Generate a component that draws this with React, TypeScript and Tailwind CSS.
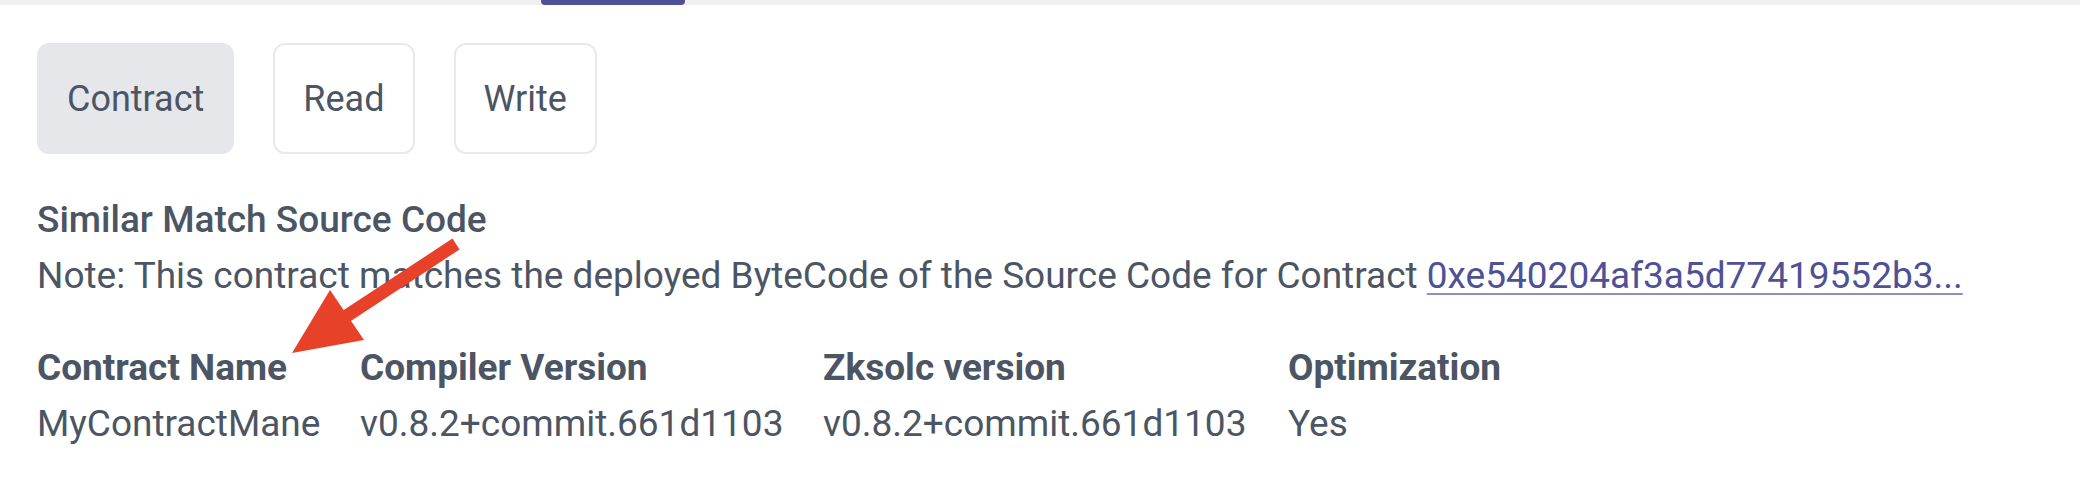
import React from "react";

const TABS = [
  { label: "Contract", active: true },
  { label: "Read", active: false },
  { label: "Write", active: false },
];

const DETAILS = [
  { title: "Contract Name", value: "MyContractMane" },
  { title: "Compiler Version", value: "v0.8.2+commit.661d1103" },
  { title: "Zksolc version", value: "v0.8.2+commit.661d1103" },
  { title: "Optimization", value: "Yes" },
];

// annotation arrow drawn over the page
const Arrow = () => (
  <svg
    className="absolute inset-0 pointer-events-none"
    width={2080}
    height={484}
    viewBox="0 0 2080 484"
  >
    <line
      x1={456}
      y1={244}
      x2={345}
      y2={317}
      stroke="#e8412a"
      strokeWidth={13}
    />
    <polygon points="292,353 364,340 330,290" fill="#e8412a" />
  </svg>
);

export default function App() {
  return (
    <div
      className="relative w-[2080px] h-[484px] bg-white text-[#4b5563] overflow-hidden"
      style={{ fontFamily: "Roboto, 'Noto Sans', sans-serif" }}
    >
      {/* top tab strip */}
      <div className="h-[5px] bg-[#f0f0f3] flex">
        <div className="ml-[541px] w-[144px] h-full bg-[#4f5196] rounded-b-sm" />
      </div>

      <div className="px-[37px]">
        <div className="flex gap-[39px] mt-[38px]">
          {TABS.map((t) => (
            <button
              key={t.label}
              className={
                t.active
                  ? "h-[111px] px-[28px] rounded-[12px] bg-[#e5e7eb] border-2 border-[#e5e7eb] text-[36px]"
                  : "h-[111px] px-[28px] rounded-[12px] bg-white border-2 border-[#e8e9ee] text-[36px]"
              }
            >
              {t.label}
            </button>
          ))}
        </div>

        <div className="mt-[38px] text-[37px] leading-[56px]">
          <div className="font-medium">Similar Match Source Code</div>
          <div>
            Note: This contract matches the deployed ByteCode of the Source
            Code for Contract{" "}
            <a className="text-[#4f5196] underline decoration-2 decoration-[#8e8fc0] underline-offset-[5px]">
              0xe540204af3a5d77419552b3...
            </a>
          </div>
        </div>

        <div className="mt-[37px] grid grid-cols-[323px_463px_465px_auto] text-[37px]">
          {DETAILS.map((d) => (
            <div key={d.title}>
              <div className="font-bold leading-[54px]">{d.title}</div>
              <div className="leading-[58px]">{d.value}</div>
            </div>
          ))}
        </div>
      </div>

      <Arrow />
    </div>
  );
}
